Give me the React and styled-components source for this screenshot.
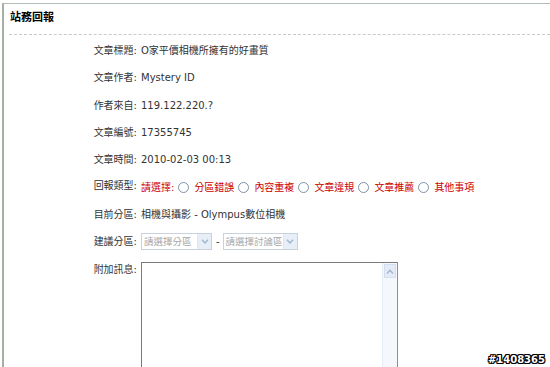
import styled, { createGlobalStyle } from 'styled-components'

const GlobalStyle = createGlobalStyle`
  html, body {
    margin: 0;
    padding: 0;
    background: #fff;
    overflow: hidden;
  }
  body {
    font-family: "DejaVu Sans", "Noto Sans CJK TC", sans-serif;
    font-size: 10px;
    color: #333;
  }
`

const rows = [
  { label: '文章標題:', value: 'O家平價相機所擁有的好畫質' },
  { label: '文章作者:', value: 'Mystery ID' },
  { label: '作者來自:', value: '119.122.220.?' },
  { label: '文章編號:', value: '17355745' },
  { label: '文章時間:', value: '2010-02-03 00:13' },
]

const reportTypes = ['分區錯誤', '內容重複', '文章違規', '文章推薦', '其他事項']

const Chevron = ({ up }) => (
  <svg width="8" height="5" viewBox="0 0 8 5">
    <path
      d={up ? 'M1 4.5 L4 1.2 L7 4.5' : 'M1 0.8 L4 4 L7 0.8'}
      fill="none"
      stroke="#9fb3cf"
      strokeWidth="1.3"
    />
  </svg>
)

const FakeSelect = ({ text, width }) => (
  <SelectBox $width={width}>
    <SelectText>{text}</SelectText>
    <SelectArrow>
      <Chevron />
    </SelectArrow>
  </SelectBox>
)

const App = () => {
  return (
    <Page>
      <GlobalStyle />
      <Panel>
        <Title>站務回報</Title>
        <Form>
          {rows.map((r) => (
            <Row key={r.label}>
              <Label>{r.label}</Label>
              <Value>{r.value}</Value>
            </Row>
          ))}

          <Row>
            <Label $raised>回報類型:</Label>
            <Value $red>
              請選擇:
              {reportTypes.map((t) => (
                <Option key={t}>
                  <Radio />
                  {t}
                </Option>
              ))}
            </Value>
          </Row>

          <Row>
            <Label>目前分區:</Label>
            <Value>相機與攝影 - Olympus數位相機</Value>
          </Row>

          <Row>
            <Label>建議分區:</Label>
            <Value>
              <FakeSelect text="請選擇分區" width={71} />
              <Dash>-</Dash>
              <FakeSelect text="請選擇討論區" width={75} />
            </Value>
          </Row>

          <Row $top>
            <Label $pad>附加訊息:</Label>
            <Value>
              <TextBox>
                <TextArea />
                <ScrollBar>
                  <ScrollButton>
                    <Chevron up />
                  </ScrollButton>
                </ScrollBar>
              </TextBox>
            </Value>
          </Row>
        </Form>
      </Panel>
      <Stamp>#1408365</Stamp>
    </Page>
  )
}

export default App

const Page = styled.div`
  position: relative;
  width: 550px;
  height: 367px;
  overflow: hidden;
  padding: 3px 0 0 2px;
  box-sizing: border-box;
`

const Panel = styled.div`
  height: 100%;
  border-left: 2px solid #a3b0a3;
  border-top: 1px solid #b3bcb3;
`

const Title = styled.div`
  margin-left: 5px;
  padding: 7px 0 9px 1px;
  height: 14px;
  border-bottom: 1px dashed #c4ccc4;
  font-weight: bold;
  font-size: 11px;
  color: #000;
  line-height: 14px;
`

const Form = styled.div`
  display: flex;
  flex-direction: column;
  padding-top: 2px;
`

const Row = styled.div`
  display: flex;
  align-items: ${(p) => (p.$top ? 'flex-start' : 'center')};
  height: ${(p) => (p.$top ? 'auto' : '27.3px')};
  margin-top: ${(p) => (p.$top ? '7px' : '0')};
`

const Label = styled.div`
  width: 133px;
  flex: none;
  text-align: right;
  color: #333;
  line-height: 13px;
  position: relative;
  top: ${(p) => (p.$raised ? '-2px' : '0')};
  padding-top: ${(p) => (p.$pad ? '1px' : '0')};
`

const Value = styled.div`
  display: flex;
  align-items: center;
  margin-left: 4px;
  line-height: 13px;
  color: ${(p) => (p.$red ? '#cc0000' : '#333')};
  white-space: nowrap;
`

const Option = styled.span`
  display: inline-flex;
  align-items: center;
  margin-left: 4px;
`

const Radio = styled.span`
  width: 9px;
  height: 9px;
  border: 1px solid #7f91a6;
  border-radius: 50%;
  background: #fff;
  margin-right: 5px;
`

const SelectBox = styled.div`
  display: flex;
  align-items: stretch;
  width: ${(p) => p.$width}px;
  height: 17px;
  box-sizing: border-box;
  border: 1px solid #c9d2dc;
  background: #fff;
`

const SelectText = styled.div`
  flex: 1;
  padding-left: 2px;
  line-height: 15px;
  font-size: 9.5px;
  color: #a6a6a6;
  overflow: hidden;
  white-space: nowrap;
`

const SelectArrow = styled.div`
  width: 13px;
  flex: none;
  display: flex;
  align-items: center;
  justify-content: center;
  background: #e8eef7;
  border-left: 1px solid #dfe6ef;
`

const Dash = styled.span`
  margin: 0 3px 0 4px;
  color: #333;
`

const TextBox = styled.div`
  display: flex;
  width: 257px;
  height: 120px;
  box-sizing: border-box;
  border: 1px solid #7b7b7b;
  border-right-color: #8e8e8e;
`

const TextArea = styled.textarea`
  flex: 1;
  border: none;
  outline: none;
  resize: none;
  padding: 2px;
  font: inherit;
`

const ScrollBar = styled.div`
  width: 14px;
  background: #f4f7fc;
  border-left: 1px solid #e6edf7;
`

const ScrollButton = styled.div`
  height: 12px;
  margin: 1px 1px 0;
  display: flex;
  align-items: center;
  justify-content: center;
  background: #e4ebf6;
  border: 1px solid #d3deee;
`

const Stamp = styled.div`
  position: absolute;
  right: 5px;
  bottom: 2px;
  font-family: "DejaVu Sans", sans-serif;
  font-weight: bold;
  font-size: 10px;
  color: #fff;
  text-shadow:
    -1px -1px 0 #000, 1px -1px 0 #000, -1px 1px 0 #000, 1px 1px 0 #000,
    0 -1px 0 #000, 0 1px 0 #000, -1px 0 0 #000, 1px 0 0 #000;
`
